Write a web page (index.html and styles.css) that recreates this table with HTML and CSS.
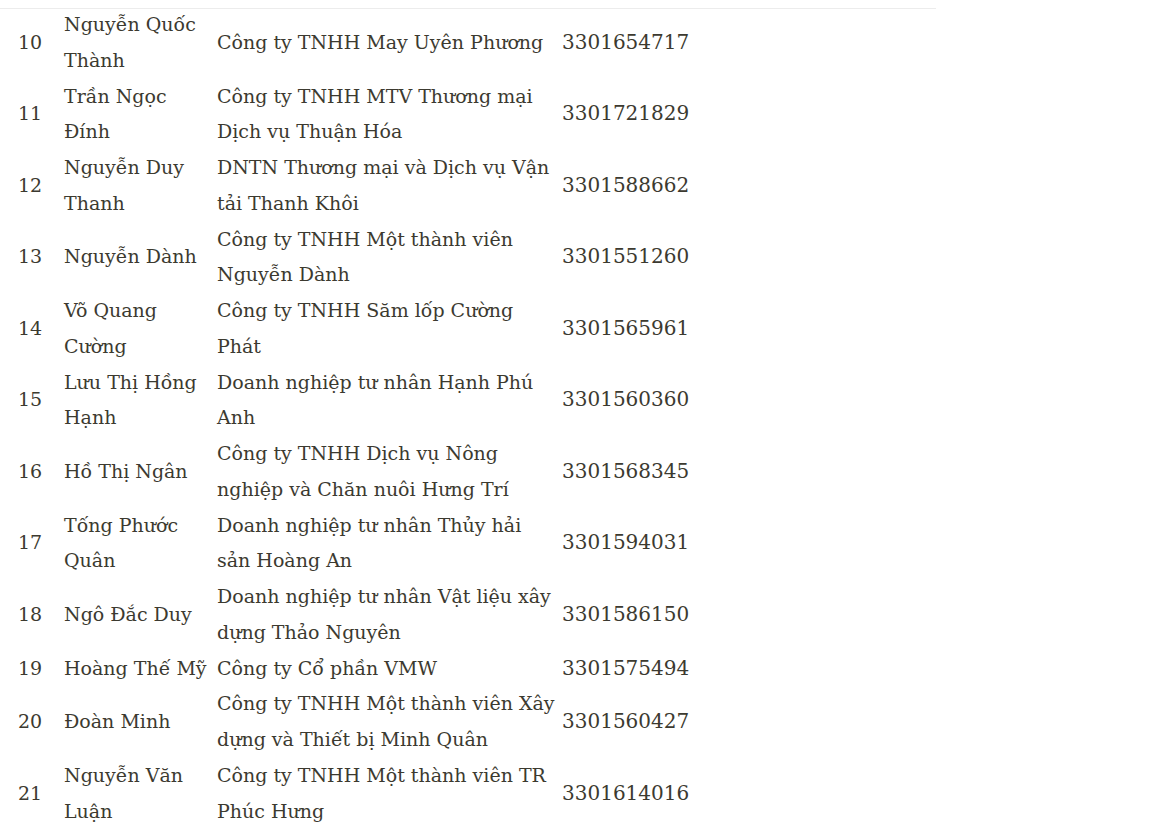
FILE: index.html
```html
<!DOCTYPE html>
<html lang="vi">
<head>
<meta charset="utf-8">
<title>Danh sách doanh nghiệp</title>
<link rel="stylesheet" href="styles.css">
</head>
<body>
<div class="wrap">
<table class="list">
<tbody>
<tr><td class="no">10</td><td class="name">Nguyễn Quốc Thành</td><td class="co">Công ty TNHH May Uyên Phương</td><td class="tax">3301654717</td></tr>
<tr><td class="no">11</td><td class="name">Trần Ngọc Đính</td><td class="co">Công ty TNHH MTV Thương mại Dịch vụ Thuận Hóa</td><td class="tax">3301721829</td></tr>
<tr><td class="no">12</td><td class="name">Nguyễn Duy Thanh</td><td class="co">DNTN Thương mại và Dịch vụ Vận tải Thanh Khôi</td><td class="tax">3301588662</td></tr>
<tr><td class="no">13</td><td class="name">Nguyễn Dành</td><td class="co">Công ty TNHH Một thành viên Nguyễn Dành</td><td class="tax">3301551260</td></tr>
<tr><td class="no">14</td><td class="name">Võ Quang Cường</td><td class="co">Công ty TNHH Săm lốp Cường Phát</td><td class="tax">3301565961</td></tr>
<tr><td class="no">15</td><td class="name">Lưu Thị Hồng Hạnh</td><td class="co">Doanh nghiệp tư nhân Hạnh Phú Anh</td><td class="tax">3301560360</td></tr>
<tr><td class="no">16</td><td class="name">Hồ Thị Ngân</td><td class="co">Công ty TNHH Dịch vụ Nông nghiệp và Chăn nuôi Hưng Trí</td><td class="tax">3301568345</td></tr>
<tr><td class="no">17</td><td class="name">Tống Phước Quân</td><td class="co">Doanh nghiệp tư nhân Thủy hải sản Hoàng An</td><td class="tax">3301594031</td></tr>
<tr><td class="no">18</td><td class="name">Ngô Đắc Duy</td><td class="co">Doanh nghiệp tư nhân Vật liệu xây dựng Thảo Nguyên</td><td class="tax">3301586150</td></tr>
<tr><td class="no">19</td><td class="name">Hoàng Thế Mỹ</td><td class="co">Công ty Cổ phần VMW</td><td class="tax">3301575494</td></tr>
<tr><td class="no">20</td><td class="name">Đoàn Minh</td><td class="co">Công ty TNHH Một thành viên Xây dựng và Thiết bị Minh Quân</td><td class="tax">3301560427</td></tr>
<tr><td class="no">21</td><td class="name">Nguyễn Văn Luận</td><td class="co">Công ty TNHH Một thành viên TR Phúc Hưng</td><td class="tax">3301614016</td></tr>
</tbody>
</table>
</div>
</body>
</html>
```
FILE: styles.css
```css
html, body {
  margin: 0;
  padding: 0;
  background: #ffffff;
}
body {
  padding-top: 8px;
  font-family: "DejaVu Serif", "Liberation Serif", serif;
  font-size: 19px;
  color: #3c3a30;
}
.wrap {
  width: 936px;
  border-top: 1px solid #ececec;
}
.list {
  border-collapse: collapse;
  table-layout: fixed;
  margin-top: -2px;
}
.list td {
  padding: 0;
  line-height: 35.75px;
  vertical-align: middle;
  text-align: left;
}
.list td.no {
  width: 46px;
  padding-left: 18px;
}
.list td.name {
  width: 153px;
}
.list td.co {
  width: 340px;
}
.list td.tax {
  width: 140px;
  padding-left: 5px;
  font-size: 20px;
}
```
